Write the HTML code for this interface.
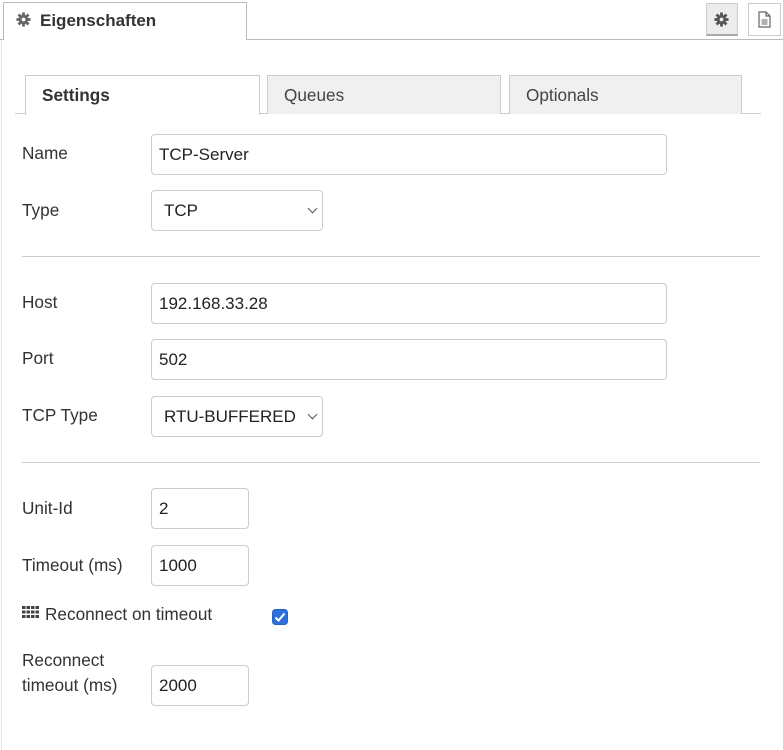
<!DOCTYPE html>
<html><head><style>
body{margin:0;width:783px;height:750px;background:#fff;font-family:"Liberation Sans",sans-serif;color:#333;position:relative;overflow:hidden}
.a{position:absolute}
.lbl{position:absolute;left:22px;font-size:17.2px;color:#333}
.in{position:absolute;border:1px solid #ccc;border-radius:4px;box-sizing:border-box;font-size:17px;padding-left:7px;line-height:39px;color:#222}
.hr{position:absolute;left:22px;width:738px;height:1px;background:#ccc}
.tab{position:absolute;top:75px;height:39px;box-sizing:border-box;border:1px solid #ccc;border-bottom:none;font-size:17.2px;line-height:38px;padding-left:16px;color:#444;background:#f0f0f0}
.chev{position:absolute;right:6px;top:14px;width:6px;height:6px;border-right:1.3px solid #555;border-bottom:1.3px solid #555;transform:rotate(45deg)}
</style></head><body>
<div class="a" style="left:1px;top:40px;width:1px;height:710px;background:#e6e6e6"></div>
<div class="a" style="left:0;top:39px;width:783px;height:1px;background:#bbb"></div>
<div class="a" style="left:3px;top:2px;width:244px;height:38px;box-sizing:border-box;border:1px solid #bbb;border-bottom:none;background:#fff;font-size:17px;font-weight:bold;line-height:36px;padding-left:36px;color:#333">Eigenschaften</div>
<svg class="a" style="left:16px;top:12px" width="15" height="15" viewBox="0 0 16 16"><g fill="#666"><circle cx="8" cy="8" r="5"/><rect x="6.5" y="0.5" width="3" height="15"/><rect x="0.5" y="6.5" width="15" height="3"/><rect x="6.5" y="0.5" width="3" height="15" transform="rotate(45 8 8)"/><rect x="6.5" y="0.5" width="3" height="15" transform="rotate(-45 8 8)"/></g><circle cx="8" cy="8" r="2" fill="#fff"/></svg>
<div class="a" style="left:706px;top:3px;width:32px;height:33px;box-sizing:border-box;background:#ececec;border:1px solid #ccc;border-bottom:2px solid #aaa"></div>
<svg class="a" style="left:714px;top:12px" width="15" height="15" viewBox="0 0 16 16"><g fill="#555"><circle cx="8" cy="8" r="5"/><rect x="6.5" y="0.5" width="3" height="15"/><rect x="0.5" y="6.5" width="15" height="3"/><rect x="6.5" y="0.5" width="3" height="15" transform="rotate(45 8 8)"/><rect x="6.5" y="0.5" width="3" height="15" transform="rotate(-45 8 8)"/></g><circle cx="8" cy="8" r="2" fill="#ececec"/></svg>
<div class="a" style="left:748px;top:3px;width:33px;height:33px;box-sizing:border-box;background:#fff;border:1px solid #ccc"></div>
<svg class="a" style="left:758px;top:11px" width="13" height="17" viewBox="0 0 13 17"><path d="M1 1h7l4 4v11H1z M8 1v4h4" fill="none" stroke="#666" stroke-width="1.2"/><path d="M3.5 9h6M3.5 11h6M3.5 13h6" stroke="#666" stroke-width="1"/></svg>

<div class="a" style="left:15px;top:113px;width:746px;height:1px;background:#ccc"></div>
<div class="tab" style="left:25px;width:235px;background:#fff;font-weight:bold;color:#333;height:40px">Settings</div>
<div class="tab" style="left:267px;width:234px">Queues</div>
<div class="tab" style="left:509px;width:233px">Optionals</div>

<div class="lbl" style="top:143px">Name</div>
<div class="in" style="left:151px;top:134px;width:516px;height:41px">TCP-Server</div>
<div class="lbl" style="top:200px">Type</div>
<div class="in" style="left:151px;top:190px;width:172px;height:41px;padding-left:12px">TCP<div class="chev"></div></div>
<div class="hr" style="top:256px"></div>
<div class="lbl" style="top:292px">Host</div>
<div class="in" style="left:151px;top:283px;width:516px;height:41px">192.168.33.28</div>
<div class="lbl" style="top:348px">Port</div>
<div class="in" style="left:151px;top:339px;width:516px;height:41px">502</div>
<div class="lbl" style="top:405px">TCP Type</div>
<div class="in" style="left:151px;top:396px;width:172px;height:41px;padding-left:12px">RTU-BUFFERED<div class="chev"></div></div>
<div class="hr" style="top:462px"></div>
<div class="lbl" style="top:498px">Unit-Id</div>
<div class="in" style="left:151px;top:488px;width:98px;height:41px">2</div>
<div class="lbl" style="top:555px">Timeout (ms)</div>
<div class="in" style="left:151px;top:545px;width:98px;height:41px">1000</div>
<svg class="a" style="left:22px;top:606px" width="17" height="12" viewBox="0 0 17 12"><g fill="#444"><rect x="0" y="0" width="3.5" height="3"/><rect x="4.5" y="0" width="3.5" height="3"/><rect x="9" y="0" width="3.5" height="3"/><rect x="13.5" y="0" width="3.5" height="3"/><rect x="0" y="4.5" width="3.5" height="3"/><rect x="4.5" y="4.5" width="3.5" height="3"/><rect x="9" y="4.5" width="3.5" height="3"/><rect x="13.5" y="4.5" width="3.5" height="3"/><rect x="0" y="9" width="3.5" height="3"/><rect x="4.5" y="9" width="3.5" height="3"/><rect x="9" y="9" width="3.5" height="3"/><rect x="13.5" y="9" width="3.5" height="3"/></g></svg>
<div class="lbl" style="left:45px;top:604px">Reconnect on timeout</div>
<svg class="a" style="left:272px;top:609px" width="16" height="16" viewBox="0 0 16 16"><rect x="0.5" y="0.5" width="15" height="15" rx="3" fill="#2f6fdb" stroke="#2a62c4"/><path d="M3.5 8.5l3 3 6-7" fill="none" stroke="#fff" stroke-width="2"/></svg>
<div class="lbl" style="top:648px;line-height:25px">Reconnect<br>timeout (ms)</div>
<div class="in" style="left:151px;top:665px;width:98px;height:41px">2000</div>
</body></html>
